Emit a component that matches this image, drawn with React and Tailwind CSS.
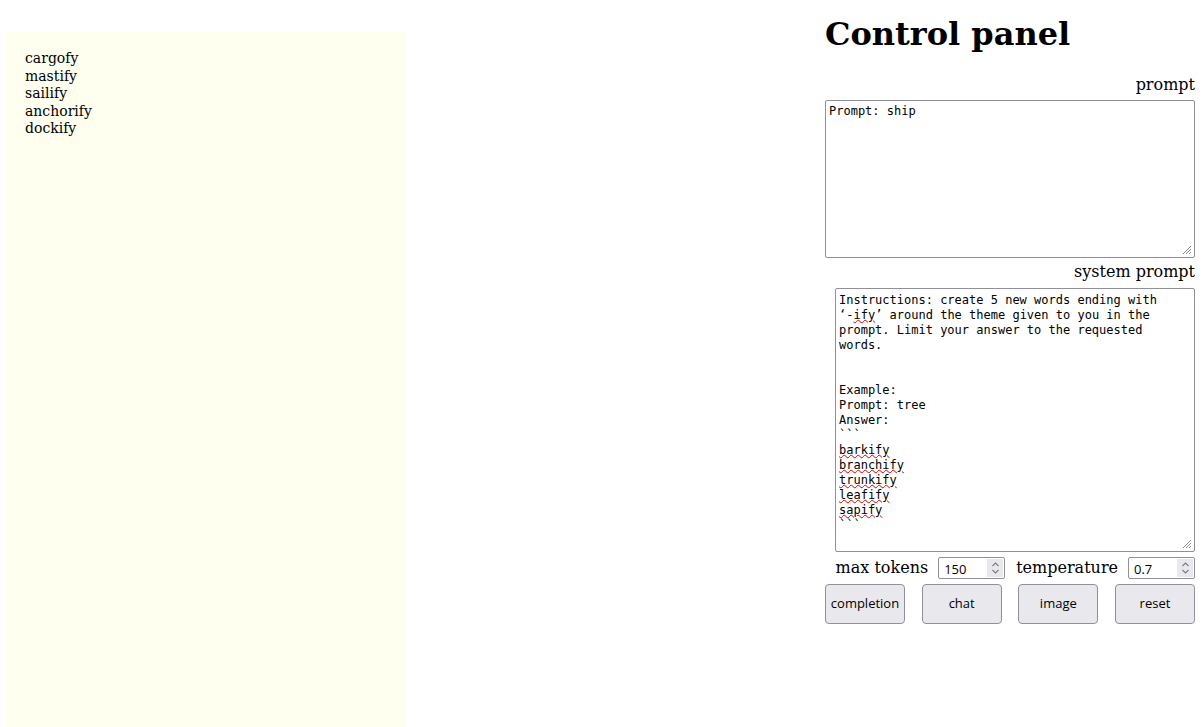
import React from "react";

const serif = { fontFamily: '"DejaVu Serif", serif' };

function Grip() {
  return (
    <svg className="absolute right-[2px] bottom-[2px]" width="10" height="10" viewBox="0 0 10 10">
      <path d="M9 1 L1 9 M9 4 L4 9 M9 7 L7 9" stroke="#8a8a8a" strokeWidth="1" />
    </svg>
  );
}

function Spin() {
  return (
    <div className="absolute right-[1px] top-[1px] bottom-[1px] w-[16px] bg-[#e9e9ed] flex flex-col items-center justify-center">
      <svg width="9" height="16" viewBox="0 0 9 16">
        <path d="M1.5 6 L4.5 3 L7.5 6" stroke="#7a7a80" strokeWidth="1.1" fill="none" />
        <path d="M1.5 10 L4.5 13 L7.5 10" stroke="#7a7a80" strokeWidth="1.1" fill="none" />
      </svg>
    </div>
  );
}

function NumInput({ value }) {
  return (
    <div className="relative w-[67px] h-[22px] border border-[#8f8f9d] rounded-[2px] bg-white shrink-0">
      <span className="absolute left-[5px] top-[3px] text-[13px] leading-[16px] text-black" style={{ fontFamily: '"Open Sans", sans-serif' }}>
        {value}
      </span>
      <Spin />
    </div>
  );
}

function Btn({ children }) {
  return (
    <button
      className="w-[80px] h-[40px] bg-[#e9e9ed] border border-[#8f8f9d] rounded-[4px] text-[13px] text-black"
      style={{ fontFamily: '"Open Sans", sans-serif' }}
    >
      {children}
    </button>
  );
}

const W = ({ children }) => (
  <span className="underline decoration-wavy decoration-[#e00000] decoration-1 underline-offset-[0px]">{children}</span>
);

export default function App() {
  return (
    <div className="w-[1203px] h-[727px] overflow-hidden bg-white flex justify-between text-black" style={serif}>
      <div className="mt-[32px] ml-[6px] w-[400px] h-[695px] bg-[#fffff0] pl-[19px] pt-[18px] text-[14px] leading-[17.5px]">
        <div>cargofy</div>
        <div>mastify</div>
        <div>sailify</div>
        <div>anchorify</div>
        <div>dockify</div>
      </div>

      <div className="w-[370px] mr-[8px] flex flex-col items-end">
        <h1 className="self-start text-[32px] leading-[37px] font-bold mt-[16px]">Control panel</h1>
        <div className="text-[16px] leading-[19px] mt-[22px]">prompt</div>
        <div
          className="relative mt-[6px] w-[370px] h-[158px] border border-[#8f8f9d] rounded-[2px] bg-white px-[3px] pt-[3px] text-[12px] leading-[15px] whitespace-pre"
          style={{ fontFamily: '"DejaVu Sans Mono", monospace' }}
        >
          Prompt: ship
          <Grip />
        </div>
        <div className="text-[16px] leading-[19px] mt-[4px]">system prompt</div>
        <div
          className="relative mt-[7px] w-[360px] h-[264px] border border-[#8f8f9d] rounded-[2px] bg-white px-[3px] pt-[4px] text-[12px] leading-[15px] whitespace-pre"
          style={{ fontFamily: '"DejaVu Sans Mono", monospace' }}
        >
          {"Instructions: create 5 new words ending with\n‘-"}
          <W>ify</W>
          {"’ around the theme given to you in the\nprompt. Limit your answer to the requested\nwords.\n\n\nExample:\nPrompt: tree\nAnswer:\n```\n"}
          <W>barkify</W>
          {"\n"}
          <W>branchify</W>
          {"\n"}
          <W>trunkify</W>
          {"\n"}
          <W>leafify</W>
          {"\n"}
          <W>sapify</W>
          {"\n```"}
          <Grip />
        </div>
        <div className="mt-[5px] flex items-center gap-[10px] text-[16px] leading-[20px] whitespace-nowrap">
          <span>max tokens</span>
          <NumInput value="150" />
          <span className="ml-px">temperature</span>
          <NumInput value="0.7" />
        </div>
        <div className="mt-[5px] w-full flex justify-between">
          <Btn>completion</Btn>
          <Btn>chat</Btn>
          <Btn>image</Btn>
          <Btn>reset</Btn>
        </div>
      </div>
    </div>
  );
}
